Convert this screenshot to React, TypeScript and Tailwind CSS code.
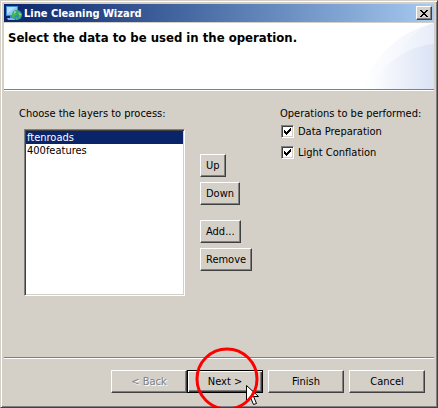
import React, { useState } from "react";

const raised =
  "border border-t-white border-l-white border-r-[#404040] border-b-[#404040] bg-[#d4d0c8] shadow-[inset_-1px_-1px_0_#808080]";

const layers = ["ftenroads", "400features"];

function SideButton({ children }: { children: React.ReactNode }) {
  return (
    <button type="button" className={`h-[23px] px-[5px] whitespace-nowrap ${raised}`}>
      {children}
    </button>
  );
}

function Operation({ label }: { label: string }) {
  return (
    <label className="flex h-[13px] items-center gap-1 whitespace-nowrap">
      <span className="relative size-[13px] shrink-0">
        <input
          type="checkbox"
          defaultChecked
          className="peer block size-[13px] appearance-none border border-t-[#808080] border-l-[#808080] border-r-white border-b-white bg-white shadow-[inset_1px_1px_0_#404040,inset_-1px_-1px_0_#d4d0c8]"
        />
        <svg
          viewBox="0 0 13 13"
          shapeRendering="crispEdges"
          className="pointer-events-none absolute inset-0 hidden size-[13px] peer-checked:block"
          aria-hidden="true"
        >
          <path d="M3 5h1v1h1v1h1v-1h1v-1h1v-1h1v-1h1v3h-1v1h-1v1h-1v1h-1v1h-1v-1h-1v-1h-1z" fill="#000" />
        </svg>
      </span>
      {label}
    </label>
  );
}

function AppIcon() {
  return (
    <svg viewBox="0 0 16 16" className="size-4 shrink-0" aria-hidden="true">
      <path d="M0 1h12v10H0z" fill="#3f86d8" />
      <path d="M1 2h10v8H1z" fill="#8cc8f6" />
      <path d="M1 2h9L1 9z" fill="#b4defc" />
      <path d="M4 11h4v2H4z" fill="#4a80c8" />
      <path d="M1 13h8v2H2z" fill="#7fb4ec" />
      <circle cx="11" cy="10" r="5" fill="#2f86d0" />
      <path d="M6 9l2-3 3-1 1 2-2 1 1 2-2 1-1 3-2-2zM12 6l3 2 1 2-2 4-2-1 1-3-2-1zM9 13l2-1 1 3h-2z" fill="#3fb850" />
      <path d="M8 7l2-1v1L8 9zM13 8l2 1-1 2z" fill="#9be87c" />
    </svg>
  );
}

export default function App() {
  const [selected, setSelected] = useState(0);
  return (
    <div className="relative flex min-h-screen w-full flex-col overflow-hidden border border-t-[#d4d0c8] border-l-[#d4d0c8] border-r-[#404040] border-b-[#404040] bg-[#d4d0c8] p-[3px] font-['DejaVu_Sans_Condensed','DejaVu_Sans',sans-serif] text-[11px] leading-[13px] text-black shadow-[inset_1px_1px_0_#fff,inset_-1px_-1px_0_#808080]">
      <header>
        <div className="flex h-[18px] items-center bg-linear-to-r from-[#0a246a] to-[#a6caf0] px-[2px] text-white">
          <AppIcon />
          <span className="ml-[2px] flex-1 font-bold">Line Cleaning Wizard</span>
          <button type="button" aria-label="Close" className={`flex h-[14px] w-4 items-center justify-center ${raised}`}>
            <svg viewBox="0 0 8 7" shapeRendering="crispEdges" className="h-[7px] w-2" aria-hidden="true">
              <path d="M0 0h2v1h1v1h2v-1h1v-1h2v1h-1v1h-1v1h-1v1h1v1h1v1h1v1h-2v-1h-1v-1h-2v1h-1v1h-2v-1h1v-1h1v-1h1v-1h-1v-1h-1v-1h-1z" fill="#000" />
            </svg>
          </button>
        </div>
        <div className="relative mt-px h-[66px] overflow-hidden bg-white">
          <svg viewBox="0 0 75 66" className="absolute top-0 right-0 h-[66px] w-[75px]" aria-hidden="true">
            <defs>
              <linearGradient id="sweep">
                <stop offset="0" stopColor="#fff" />
                <stop offset="1" stopColor="#eef2fb" />
              </linearGradient>
              <linearGradient id="arc">
                <stop offset="0" stopColor="#f6f8fd" />
                <stop offset="1" stopColor="#e6ecf9" />
              </linearGradient>
              <linearGradient id="dome">
                <stop offset="0" stopColor="#fff" />
                <stop offset="1" stopColor="#dae2f5" />
              </linearGradient>
            </defs>
            <path d="M2 66Q25 12 75 0V66z" fill="url(#sweep)" />
            <path d="M39 34Q50 8 75 0V24Q54 24 39 34z" fill="url(#arc)" />
            <path d="M9 66Q36 24 75 21V66z" fill="url(#dome)" />
          </svg>
          <h1 className="relative pt-[7px] pl-1 text-[13px] leading-4 font-bold whitespace-nowrap">
            Select the data to be used in the operation.
          </h1>
        </div>
        <div className="h-[2px] border-t border-b border-t-[#808080] border-b-white" />
      </header>

      <main className="flex flex-1 items-start pt-4 pl-[15px]">
        <section>
          <h2 id="layers-title" className="whitespace-nowrap">Choose the layers to process:</h2>
          <div className="mt-[9px] ml-[5px] flex items-start gap-[15px]">
            <ul
              role="listbox"
              aria-labelledby="layers-title"
              className="h-[167px] w-[161px] border border-t-[#808080] border-l-[#808080] border-r-white border-b-white bg-white p-px shadow-[inset_1px_1px_0_#404040,inset_-1px_-1px_0_#d4d0c8]"
            >
              {layers.map((name, i) => (
                <li
                  key={name}
                  role="option"
                  aria-selected={i === selected}
                  onClick={() => setSelected(i)}
                  className={`pl-px ${i === selected ? "bg-[#0a246a] text-white" : ""}`}
                >
                  {name}
                </li>
              ))}
            </ul>
            <div className="flex flex-col items-start gap-[15px] pt-[25px]">
              <div className="flex flex-col items-start gap-[5px]">
                <SideButton>Up</SideButton>
                <SideButton>Down</SideButton>
              </div>
              <div className="flex flex-col items-start gap-[5px]">
                <SideButton>Add...</SideButton>
                <SideButton>Remove</SideButton>
              </div>
            </div>
          </div>
        </section>
        <fieldset className="ml-auto w-[154px]">
          <legend className="whitespace-nowrap">Operations to be performed:</legend>
          <div className="flex flex-col gap-2 pt-[5px] pl-px">
            <Operation label="Data Preparation" />
            <Operation label="Light Conflation" />
          </div>
        </fieldset>
      </main>

      <footer className="flex justify-end gap-[5px] border-t border-t-[#808080] pt-3 pr-[9px] pb-[11px] shadow-[inset_0_1px_0_#fff]">
        <div className="flex">
          <button type="button" disabled className={`h-[23px] w-[76px] text-[#808080] [text-shadow:1px_1px_0_#fff] ${raised}`}>
            &lt; Back
          </button>
          <div className="relative">
            <button type="button" className="h-[23px] w-[76px] border border-black bg-[#d4d0c8] shadow-[inset_1px_1px_0_#fff,inset_-1px_-1px_0_#404040,inset_-2px_-2px_0_#808080]">
              Next &gt;
            </button>
            <svg viewBox="0 0 70 70" className="pointer-events-none absolute -top-[26px] left-[5px] size-[70px]" aria-hidden="true">
              <path d="M54.500 41.500v16l4-4 3 7 3-1-3-7h5z" fill="#fff" stroke="#000" />
              <circle cx="35" cy="35" r="30" fill="none" stroke="#f00" strokeWidth="3" />
            </svg>
          </div>
        </div>
        <button type="button" className={`h-[23px] w-[76px] ${raised}`}>Finish</button>
        <button type="button" className={`h-[23px] w-[76px] ${raised}`}>Cancel</button>
      </footer>
    </div>
  );
}
